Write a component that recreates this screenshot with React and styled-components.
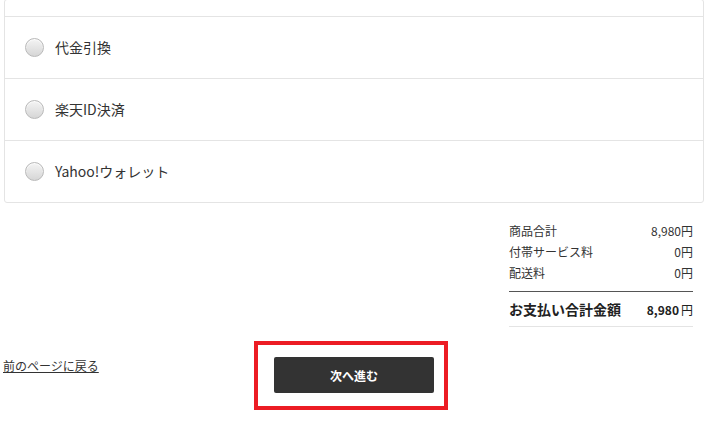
import React, { useState } from 'react';
import styled, { createGlobalStyle } from 'styled-components';

const GlobalStyle = createGlobalStyle`
    html, body {
        margin: 0;
        padding: 0;
        background: #fff;
        font-family: "Noto Sans CJK JP", "Noto Sans", sans-serif;
        color: #333;
    }
`

const methods = ["代金引換", "楽天ID決済", "Yahoo!ウォレット"];

const summary = [
    { label: "商品合計", value: "8,980" },
    { label: "付帯サービス料", value: "0" },
    { label: "配送料", value: "0" },
];

const App = () => {

    const [selected, setSelected] = useState(null);

    return (
        <Page>
            <GlobalStyle />
            <PaymentPanel>
                <PanelTop />
                {methods.map((m) => (
                    <MethodRow key={m} onClick={() => setSelected(m)}>
                        <Radio checked={selected === m} />
                        <span>{m}</span>
                    </MethodRow>
                ))}
            </PaymentPanel>

            <Summary>
                <div className="rows">
                    {summary.map((s) => (
                        <SummaryRow key={s.label}>
                            <span>{s.label}</span>
                            <span>{s.value}円</span>
                        </SummaryRow>
                    ))}
                </div>
                <TotalRow>
                    <span className="label">お支払い合計金額</span>
                    <span className="value"><b>8,980</b>円</span>
                </TotalRow>
            </Summary>

            <Footer>
                <BackLink href="#">前のページに戻る</BackLink>
                <Highlight>
                    <NextButton type="button">次へ進む</NextButton>
                </Highlight>
            </Footer>
        </Page>
    )
}

export default App;

const Page = styled.div`
    width: 707px;
    height: 437px;
    overflow: hidden;
`

const PaymentPanel = styled.div`
    margin: -1px 3px 0 4px;
    border: 1px solid #e4e4e4;
    border-radius: 3px;
    background: #fff;
`

const PanelTop = styled.div`
    height: 16px;
`

const MethodRow = styled.label`
    display: flex;
    align-items: center;
    height: 61px;
    padding-left: 20px;
    border-top: 1px solid #e4e4e4;
    font-size: 14px;
    color: #333;
    cursor: pointer;

    span {
        margin-left: 11px;
        line-height: 1;
        margin-top: -1px;
    }
`

const Radio = styled.i`
    display: block;
    width: 17px;
    height: 17px;
    border-radius: 50%;
    border: 1px solid #b9b9b9;
    background: ${({ checked }) => checked
        ? "radial-gradient(circle, #333 0 4px, #e8e8e8 5px)"
        : "linear-gradient(#f4f4f4, #d6d6d6)"};
    box-shadow: inset 0 1px 1px rgba(255, 255, 255, 0.8);
`

const Summary = styled.div`
    width: 184px;
    margin: 17px 0 0 509px;
    font-size: 12px;

    .rows {
        padding-bottom: 8px;
        border-bottom: 1px solid #555;
    }
`

const SummaryRow = styled.div`
    display: flex;
    justify-content: space-between;
    height: 21px;
    line-height: 21px;
    color: #333;
`

const TotalRow = styled.div`
    display: flex;
    justify-content: space-between;
    align-items: center;
    height: 34px;
    border-bottom: 1px solid #e4e4e4;
    color: #222;

    .label {
        font-size: 14px;
        font-weight: bold;
    }

    .value {
        font-size: 12px;
        b {
            margin-right: 2px;
        }
    }
`

const Footer = styled.div`
    display: flex;
    align-items: flex-start;
    margin-top: 14px;
    padding-left: 3px;
`

const BackLink = styled.a`
    width: 251px;
    margin-top: 17px;
    font-size: 12px;
    line-height: 16px;
    color: #333;
    text-decoration: underline;
`

const Highlight = styled.div`
    border: 4px solid #ec1c24;
    padding: 12px 10px 13px 16px;
`

const NextButton = styled.button`
    display: block;
    width: 160px;
    height: 36px;
    border: none;
    border-radius: 2px;
    background: #333;
    color: #fff;
    font-family: "Noto Sans CJK JP", sans-serif;
    font-size: 12px;
    font-weight: bold;
    cursor: pointer;
`
